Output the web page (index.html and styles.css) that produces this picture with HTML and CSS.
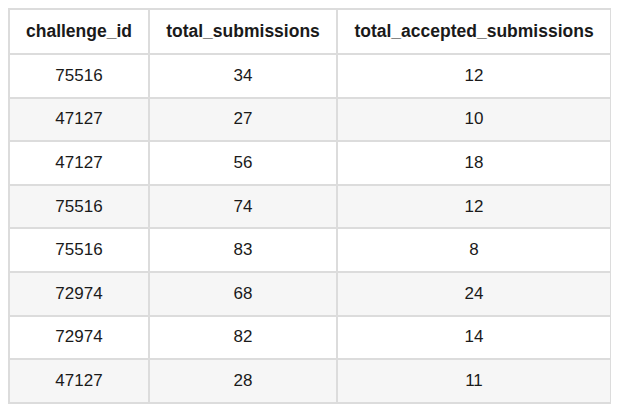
FILE: index.html
```html
<!DOCTYPE html>
<html>
<head>
<meta charset="utf-8">
<link rel="stylesheet" href="styles.css">
</head>
<body>
<table class="grid">
  <colgroup>
    <col class="c1"><col class="c2"><col class="c3">
  </colgroup>
  <thead>
    <tr><th>challenge_id</th><th>total_submissions</th><th>total_accepted_submissions</th></tr>
  </thead>
  <tbody>
    <tr><td>75516</td><td>34</td><td>12</td></tr>
    <tr><td>47127</td><td>27</td><td>10</td></tr>
    <tr><td>47127</td><td>56</td><td>18</td></tr>
    <tr><td>75516</td><td>74</td><td>12</td></tr>
    <tr><td>75516</td><td>83</td><td>8</td></tr>
    <tr><td>72974</td><td>68</td><td>24</td></tr>
    <tr><td>72974</td><td>82</td><td>14</td></tr>
    <tr><td>47127</td><td>28</td><td>11</td></tr>
  </tbody>
</table>
</body>
</html>
```
FILE: styles.css
```css
html, body {
  background: #ffffff;
}
body {
  margin: 8px;
  font-family: "Liberation Sans", Arial, Helvetica, sans-serif;
  color: #1a1a1a;
}
.grid {
  border-collapse: collapse;
  width: 602px;
  table-layout: fixed;
}
.c1 { width: 140px; }
.c2 { width: 188px; }
.c3 { width: 274px; }
.grid th,
.grid td {
  border: 2px solid #dcdcdc;
  text-align: center;
  padding: 0;
  font-size: 17px;
}
.grid th {
  height: 43px;
  font-weight: bold;
  font-size: 17.5px;
  background: #ffffff;
}
.grid td {
  height: 41.6px;
}
.grid tbody tr:nth-child(even) td {
  background: #f6f6f6;
}
```
